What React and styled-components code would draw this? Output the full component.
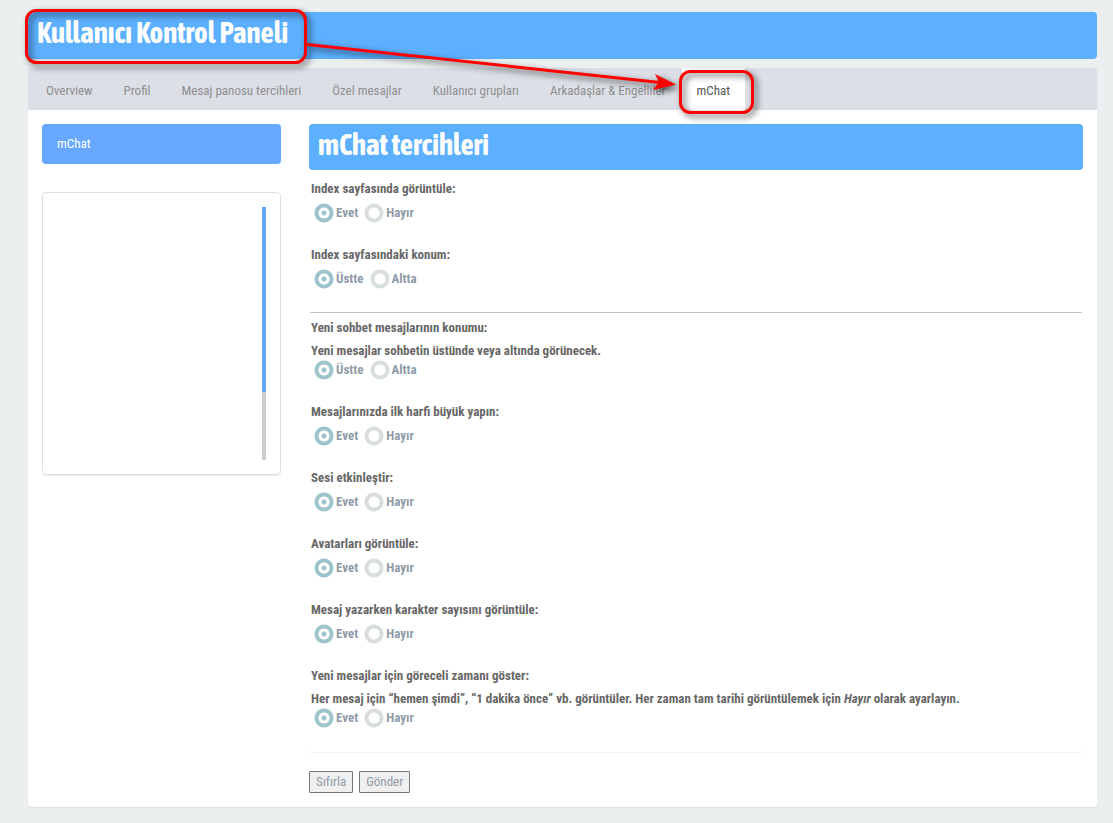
import React from "react";
import styled, { createGlobalStyle } from "styled-components";

const Global = createGlobalStyle`
  * { box-sizing: border-box; }
  body {
    margin: 0;
    background: #ebefef;
    color: #676767;
    font-family: "Roboto Condensed", "Liberation Sans Narrow", "Roboto", sans-serif;
    font-size: 13px;
    line-height: 20px;
  }
`;

const Page = styled.div`
  position: relative;
  padding: 12px 16px 16px 28px;
`;

const Banner = styled.header`
  background: #5cb0ff;
  border-radius: 4px;
  color: #fff;
  padding: ${(p) => (p.$inner ? "3px 9px 7px" : "3px 9px 8px")};
`;

const Heading = styled.h2`
  margin: 0;
  font-family: "Asap Condensed", "Roboto Condensed", "Liberation Sans Narrow", "Roboto", sans-serif;
  font-size: 29px;
  font-weight: 700;
  line-height: 36px;
`;

const Panel = styled.section`
  margin-top: 9px;
  background: #fff;
  border-radius: 4px;
  box-shadow: 0 1px 1px #dcdfe3;
`;

const Tabs = styled.nav`
  display: flex;
  gap: 1px;
  height: 42px;
  padding-left: 3px;
  background: #dcdfe6;
  border-radius: 3px 3px 0 0;
`;

const Tab = styled.a`
  display: flex;
  align-items: center;
  padding: 4px 15px 0;
  color: ${(p) => (p.$active ? "#555" : "#8f8f8f")};
  background: ${(p) => (p.$active ? "#fff" : "transparent")};
  text-decoration: none;
  white-space: nowrap;
`;

const Columns = styled.div`
  display: grid;
  grid-template-columns: 239px minmax(0, 1fr);
  gap: 28px;
  padding: 14px;
`;

const Side = styled.aside`
  display: flex;
  flex-direction: column;
  gap: 28px;
`;

const SideLink = styled.a`
  display: block;
  padding: 10px 15px;
  background: #66a8ff;
  border-radius: 4px;
  color: #fff;
  text-decoration: none;
`;

const SideBox = styled.div`
  display: flex;
  justify-content: flex-end;
  padding: 14px;
  border: 1px solid #dcdfe6;
  border-radius: 4px;
  box-shadow: 0 1px 1px #ebedf0;
`;

const Track = styled.div`
  width: 4px;
  height: 253px;
  background: #ccc;
`;

const Thumb = styled.div`
  height: 185px;
  background: #66a8ff;
`;

const Form = styled.form`
  font-weight: 700;
`;

const Fields = styled.div`
  padding: 7px 1px 4px;
  border-bottom: 1px solid #f0f0f0;
  border-radius: 4px;
`;

const Divider = styled.hr`
  height: 1px;
  margin: 3px 0;
  border: 0;
  background: #c3c3c3;
`;

const Field = styled.fieldset`
  min-width: 0;
  margin: 0;
  padding: 0 0 20px;
  border: 0;
`;

const Legend = styled.legend`
  padding: 0 1px;
  line-height: 24px;
`;

const Hint = styled.p`
  margin: 1px 0 0;
  padding: 0 1px;
  line-height: 19px;
`;

const Choices = styled.div`
  display: flex;
  gap: 6px;
  padding: 0 4px;
  margin-top: ${(p) => (p.$spaced ? "2px" : "0")};
`;

const Choice = styled.label`
  display: flex;
  gap: 2px;
  color: #8f9ba8;
`;

const Radio = styled.input`
  appearance: none;
  width: 20px;
  height: 20px;
  margin: 0;
  border-radius: 50%;
  background: radial-gradient(circle, #fff 5px, #d8dedf 6px, #d8dedf 9px, transparent 10px);
  &:checked {
    background: radial-gradient(circle, #9dc3cd 2px, #fff 3px, #fff 5px, #9dc3cd 6px, #9dc3cd 9px, transparent 10px);
  }
`;

const Actions = styled.div`
  display: flex;
  gap: 6px;
  padding-top: 18px;
`;

const Button = styled.button`
  height: 22px;
  padding: 0 6px;
  border: 1px solid #767676;
  border-radius: 1px;
  background: #efefef;
  color: #8f9ba8;
  font: inherit;
  font-weight: 400;
`;

const Annotations = styled.svg`
  position: absolute;
  top: 0;
  left: 0;
  pointer-events: none;
  filter: drop-shadow(3px 3px 3px rgba(0, 0, 0, 0.65));
`;

const tabs = ["Overview", "Profil", "Mesaj panosu tercihleri", "Özel mesajlar", "Kullanıcı grupları", "Arkadaşlar & Engelliler", "mChat"];

const yesNo = ["Evet", "Hayır"];
const topBottom = ["Üstte", "Altta"];

const placement = [
  { id: "index", label: "Index sayfasında görüntüle:", options: yesNo },
  { id: "position", label: "Index sayfasındaki konum:", options: topBottom },
];

const behaviour = [
  { id: "order", label: "Yeni sohbet mesajlarının konumu:", hint: "Yeni mesajlar sohbetin üstünde veya altında görünecek.", options: topBottom },
  { id: "capital", label: "Mesajlarınızda ilk harfi büyük yapın:", options: yesNo },
  { id: "sound", label: "Sesi etkinleştir:", options: yesNo },
  { id: "avatars", label: "Avatarları görüntüle:", options: yesNo },
  { id: "count", label: "Mesaj yazarken karakter sayısını görüntüle:", options: yesNo },
  {
    id: "relative",
    label: "Yeni mesajlar için göreceli zamanı göster:",
    hint: (
      <>
        Her mesaj için “hemen şimdi”, “1 dakika önce” vb. görüntüler. Her zaman tam tarihi görüntülemek için <em>Hayır</em> olarak ayarlayın.
      </>
    ),
    options: yesNo,
  },
];

function Setting({ id, label, hint, options }) {
  return (
    <Field>
      <Legend>{label}</Legend>
      {hint && <Hint>{hint}</Hint>}
      <Choices $spaced={!hint}>
        {options.map((text, i) => (
          <Choice key={text}>
            <Radio type="radio" name={id} value={text} defaultChecked={i === 0} />
            {text}
          </Choice>
        ))}
      </Choices>
    </Field>
  );
}

export default function App() {
  return (
    <Page>
      <Global />
      <Banner>
        <Heading as="h1">Kullanıcı Kontrol Paneli</Heading>
      </Banner>
      <Panel>
        <Tabs>
          {tabs.map((t) => (
            <Tab key={t} href="#" $active={t === "mChat"}>{t}</Tab>
          ))}
        </Tabs>
        <Columns>
          <Side>
            <SideLink href="#">mChat</SideLink>
            <SideBox>
              <Track>
                <Thumb />
              </Track>
            </SideBox>
          </Side>
          <Form>
            <Banner as="div" $inner>
              <Heading>mChat tercihleri</Heading>
            </Banner>
            <Fields>
              {placement.map((s) => <Setting key={s.id} {...s} />)}
              <Divider />
              {behaviour.map((s) => <Setting key={s.id} {...s} />)}
            </Fields>
            <Actions>
              <Button type="reset">Sıfırla</Button>
              <Button type="button">Gönder</Button>
            </Actions>
          </Form>
        </Columns>
      </Panel>
      <Annotations width="780" height="130" viewBox="0 0 780 130" aria-hidden="true">
        <rect x="26.500" y="10.500" width="279" height="52" rx="10" fill="none" stroke="#f00" strokeWidth="3" />
        <rect x="680.500" y="71.500" width="72" height="41" rx="10" fill="none" stroke="#f00" strokeWidth="3" />
        <path d="M307 44.500L660 82.500" stroke="#f00" strokeWidth="3" />
        <path d="M676 84.500L655 74L659 82L653 90Z" fill="#f00" />
      </Annotations>
    </Page>
  );
}
